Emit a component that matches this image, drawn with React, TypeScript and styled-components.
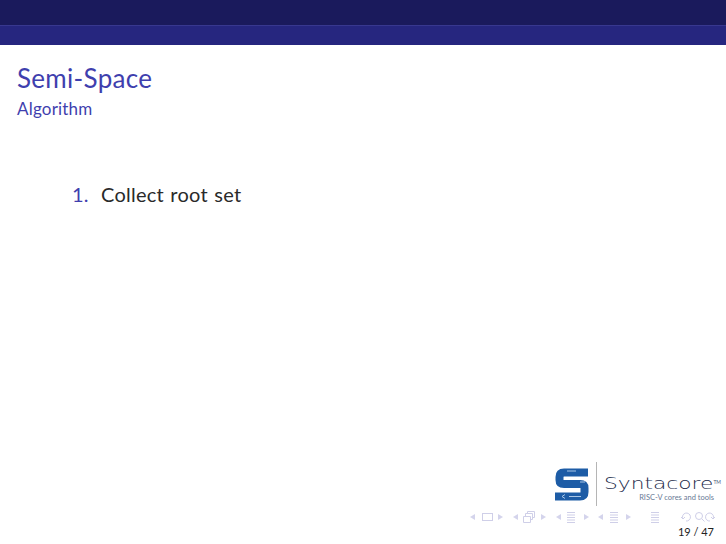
import React from 'react';
import styled, { createGlobalStyle } from 'styled-components';

const GlobalStyle = createGlobalStyle`
  html, body {
    margin: 0;
    padding: 0;
    background: #fff;
  }
`;

const Slide = styled.div`
  width: 726px;
  height: 544px;
  display: flex;
  flex-direction: column;
  overflow: hidden;
  background: #fff;
  font-family: 'Lato', 'Liberation Sans', sans-serif;
`;

const TopBar = styled.div`
  height: 25px;
  background: #1a1a5c;
  border-bottom: 1px solid #38388f;
`;

const SubBar = styled.div`
  height: 19px;
  background: #26267f;
`;

const FrameTitle = styled.div`
  padding: 17px 0 0 17px;
  color: #3f3fae;
`;

const Title = styled.h1`
  margin: 0;
  font-size: 26px;
  line-height: 32px;
  font-weight: 400;
  letter-spacing: 0.3px;
`;

const Subtitle = styled.h2`
  margin: 5px 0 0;
  font-size: 17px;
  line-height: 20px;
  font-weight: 400;
  letter-spacing: 0.2px;
`;

const Steps = styled.ol`
  list-style: none;
  margin: 0;
  padding: 63px 0 0 72px;
`;

const Step = styled.li`
  display: flex;
  font-size: 20px;
  line-height: 24px;
  letter-spacing: 0.25px;
  word-spacing: 1px;
  color: #2a2a2a;
`;

const StepNumber = styled.span`
  width: 29px;
  color: #3f3fae;
`;

const Footer = styled.footer`
  margin-top: auto;
  display: flex;
  flex-direction: column;
  align-items: flex-end;
  padding: 0 10px 5px 0;
`;

const Logo = styled.div`
  display: flex;
  align-items: center;
  height: 44px;
  margin-right: -5px;
`;

const Divider = styled.div`
  width: 1px;
  height: 44px;
  margin: 0 7px;
  background: #b5b5b5;
`;

const Wordmark = styled.div`
  position: relative;
  width: 117px;
  padding-top: 8px;
  color: #1c2b4a;
`;

const BrandName = styled.div`
  font-family: 'DejaVu Sans', sans-serif;
  font-size: 16px;
  font-weight: 200;
  line-height: 19px;
  transform: scaleX(1.36);
  transform-origin: left center;
`;

const Trademark = styled.span`
  position: absolute;
  top: 14px;
  right: 0;
  font-size: 5px;
  line-height: 5px;
  color: #46587a;
`;

const Tagline = styled.div`
  font-size: 7.5px;
  line-height: 9px;
  text-align: right;
  color: #6a7a96;
  padding-right: 7px;
`;

const NavRow = styled.div`
  height: 16px;
  margin-top: 3px;
`;

const PageNumber = styled.div`
  font-size: 11px;
  line-height: 14px;
  color: #222;
  padding-right: 2px;
`;

const SyntacoreMark = () => (
  <svg width="34" height="33" viewBox="0 0 34 33" fill="none">
    <path
      d="M33 4.500H9Q4.500 4.500 4.500 9V12Q4.500 16 9 16H25Q29.500 16 29.500 20V24Q29.500 28.500 25 28.500H0"
      stroke="#1d5ca6"
      strokeWidth="8"
    />
    <path d="M12 3h9M25 14h5M7 28.500l3-2M7 28.500l3 2M14 28.500h12" stroke="#a9c6e6" strokeWidth="1" />
  </svg>
);

const LineStack = ({ x }: { x: number }) => (
  <path d={`M${x} 3.500h8M${x} 6h8M${x} 8.500h8M${x} 11h8M${x} 13.500h8`} />
);

const NavIcons = () => (
  <svg width="246" height="16" viewBox="0 0 246 16" fill="none">
    <g fill="#d4d4ec">
      <path d="M0 8l5-3v6z" />
      <path d="M28 5l5 3-5 3z" />
      <path d="M43 8l5-3v6z" />
      <path d="M71 5l5 3-5 3z" />
      <path d="M86 8l5-3v6z" />
      <path d="M114 5l5 3-5 3z" />
      <path d="M128 8l5-3v6z" />
      <path d="M156 5l5 3-5 3z" />
    </g>
    <g stroke="#cfcfe8" strokeWidth="1">
      <rect x="12.500" y="4.500" width="10" height="7" />
      <path d="M53.500 13.500v-6h7v6zM55.500 7V4.500h7v6h-2M57.500 4V2.500h7v6h-2" />
      <LineStack x={97} />
      <LineStack x={140} />
      <LineStack x={181} />
      <path d="M213 10a4 4 0 1 1 3 2M213 10l-2-2M213 10l2-2" />
      <circle cx="229" cy="7" r="3.500" />
      <path d="M232 10l2.500 2.500" />
      <path d="M243 10a4 4 0 1 0-3 2M243 10l-2-2M243 10l2-2" />
    </g>
  </svg>
);

export default function App() {
  return (
    <>
      <GlobalStyle />
      <Slide>
        <TopBar />
        <SubBar />
        <FrameTitle>
          <Title>Semi-Space</Title>
          <Subtitle>Algorithm</Subtitle>
        </FrameTitle>
        <Steps>
          <Step>
            <StepNumber>1.</StepNumber>
            Collect root set
          </Step>
        </Steps>
        <Footer>
          <Logo>
            <SyntacoreMark />
            <Divider />
            <Wordmark>
              <BrandName>Syntacore</BrandName>
              <Trademark>TM</Trademark>
              <Tagline>RISC-V cores and tools</Tagline>
            </Wordmark>
          </Logo>
          <NavRow>
            <NavIcons />
          </NavRow>
          <PageNumber>19 / 47</PageNumber>
        </Footer>
      </Slide>
    </>
  );
}
